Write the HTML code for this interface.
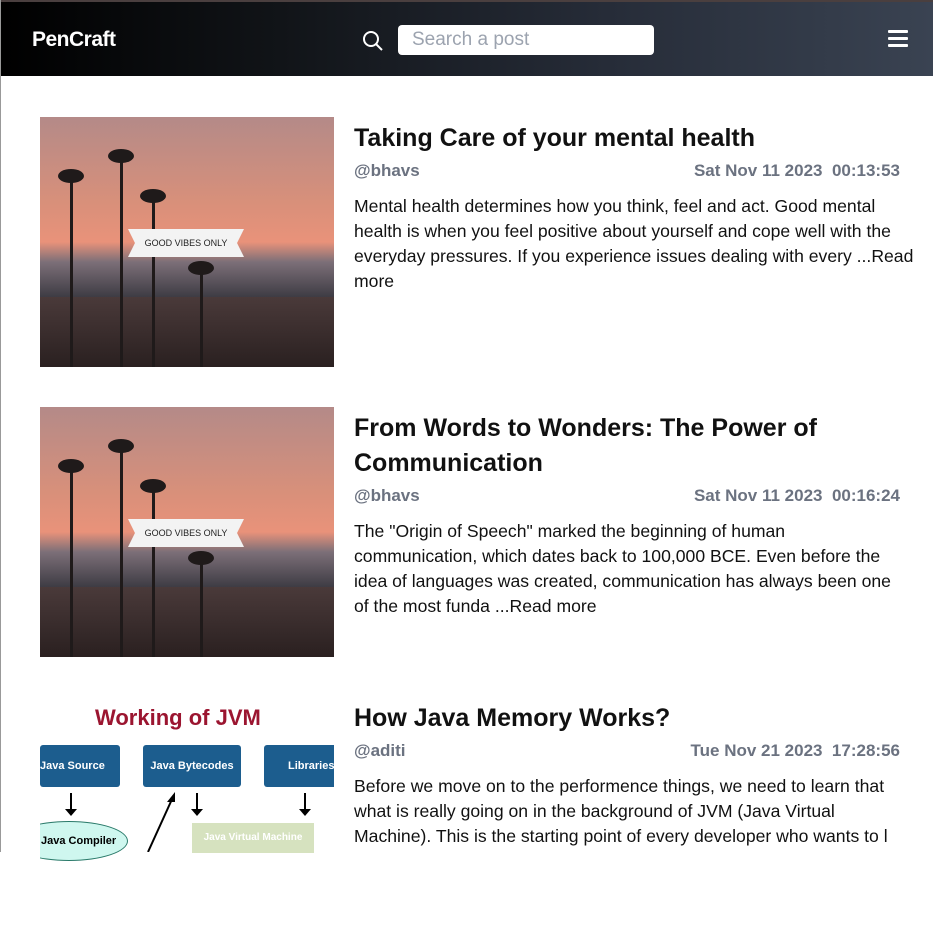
<!DOCTYPE html>
<html><head><meta charset="utf-8"><style>
*{margin:0;padding:0;box-sizing:border-box}
html,body{width:933px;height:852px;overflow:hidden}
body{background:#fff;font-family:"Liberation Sans",sans-serif;border-left:1px solid #999}
.hdr{height:76px;background:linear-gradient(90deg,#000 0%,#111418 30%,#262c38 65%,#3a4352 100%);border-top:2px solid #4a3f3f;position:relative}
.logo{position:absolute;left:31px;top:26px;color:#fff;font-weight:bold;font-size:21px;letter-spacing:-0.5px}
.srch{position:absolute;left:397px;top:23px;width:256px;height:30px;background:#fff;border-radius:4px;color:#9ca3af;font-size:19px;padding:4px 14px}
.ham{position:absolute;left:887px;top:28px;width:20px}
.ham i{display:block;height:3px;background:#fff;margin-bottom:4px;border-radius:1px}
.post{position:absolute;left:40px;width:870px}
.img{position:absolute;left:0;top:0;width:294px;height:250px;background:linear-gradient(180deg,#b48a88 0%,#d9907a 35%,#e9927a 50%,#7c6f78 58%,#3e3c44 72%,#2a2426 100%);overflow:hidden}
.banner{position:absolute;left:88px;top:112px;width:116px;height:28px;background:#f3f3f3;clip-path:polygon(0 0,100% 0,94% 50%,100% 100%,0 100%,6% 50%);font-size:9px;text-align:center;line-height:28px;color:#222}
.palm{position:absolute;background:#1f1a1a;width:3px}
.crown{position:absolute;width:26px;height:14px;background:#1f1a1a;border-radius:50%}
.city{position:absolute;left:0;bottom:0;width:294px;height:70px;background:linear-gradient(180deg,#4a3a3a,#2a2020)}
.t{position:absolute;left:314px;top:4px;font-size:25px;font-weight:bold;color:#111;line-height:35px;width:540px}
.meta{position:absolute;left:314px;width:546px;font-size:17px;font-weight:bold;color:#6b7280;display:flex;justify-content:space-between}
.d{position:absolute;left:314px;width:540px;font-size:17.6px;color:#111;line-height:25px}
</style></head><body>
<div class="hdr">
<div class="logo">PenCraft</div>
<svg style="position:absolute;left:361px;top:28px" width="22" height="22" viewBox="0 0 22 22"><circle cx="9" cy="9" r="7" fill="none" stroke="#fff" stroke-width="2"/><path d="M14 14l6 6" stroke="#fff" stroke-width="2"/></svg>
<div class="srch">Search a post</div>
<div class="ham"><i></i><i></i><i></i></div>
</div>

<div class="post" style="top:117px">
<div class="img"><div class="city"></div><div class="palm" style="left:30px;top:60px;height:190px"></div><div class="crown" style="left:18px;top:52px"></div><div class="palm" style="left:80px;top:40px;height:210px"></div><div class="crown" style="left:68px;top:32px"></div><div class="palm" style="left:112px;top:80px;height:170px"></div><div class="crown" style="left:100px;top:72px"></div><div class="palm" style="left:160px;top:150px;height:100px"></div><div class="crown" style="left:148px;top:144px"></div><div class="banner">GOOD VIBES ONLY</div></div>
<div class="t">Taking Care of your mental health</div>
<div class="meta" style="top:44px"><span>@bhavs</span><span>Sat Nov 11 2023 &nbsp;00:13:53</span></div>
<div class="d" style="top:77px;width:560px">Mental health determines how you think, feel and act. Good mental<br>health is when you feel positive about yourself and cope well with the<br>everyday pressures. If you experience issues dealing with every ...Read<br>more</div>
</div>

<div class="post" style="top:407px">
<div class="img"><div class="city"></div><div class="palm" style="left:30px;top:60px;height:190px"></div><div class="crown" style="left:18px;top:52px"></div><div class="palm" style="left:80px;top:40px;height:210px"></div><div class="crown" style="left:68px;top:32px"></div><div class="palm" style="left:112px;top:80px;height:170px"></div><div class="crown" style="left:100px;top:72px"></div><div class="palm" style="left:160px;top:150px;height:100px"></div><div class="crown" style="left:148px;top:144px"></div><div class="banner">GOOD VIBES ONLY</div></div>
<div class="t">From Words to Wonders: The Power of Communication</div>
<div class="meta" style="top:79px"><span>@bhavs</span><span>Sat Nov 11 2023 &nbsp;00:16:24</span></div>
<div class="d" style="top:112px">The "Origin of Speech" marked the beginning of human<br>communication, which dates back to 100,000 BCE. Even before the idea of languages was created, communication has always been one of the most funda ...Read more</div>
</div>

<div class="post" style="top:697px">
<div class="img" style="background:#fff">
<div style="position:absolute;left:55px;top:8px;font-size:22px;font-weight:bold;color:#9b1530">Working of JVM</div>
<div style="position:absolute;left:0;top:48px;width:80px;height:42px;background:#1c5d8e;border-radius:3px;color:#fff;font-size:11px;font-weight:bold;line-height:42px">Java Source</div>
<div style="position:absolute;left:103px;top:48px;width:98px;height:42px;background:#1c5d8e;border-radius:3px;color:#fff;font-size:11px;font-weight:bold;line-height:42px;text-align:center">Java Bytecodes</div>
<div style="position:absolute;left:224px;top:48px;width:80px;height:42px;background:#1c5d8e;border-radius:3px;color:#fff;font-size:11px;font-weight:bold;line-height:42px;padding-left:24px">Libraries</div>
<div style="position:absolute;left:-30px;top:124px;width:118px;height:40px;background:#cff7ef;border:1px solid #2a7a6a;border-radius:50%;font-size:11px;font-weight:bold;line-height:38px;padding-left:30px">Java Compiler</div>
<div style="position:absolute;left:152px;top:126px;width:122px;height:30px;background:#d6e2bf;color:#fff;font-size:10px;font-weight:bold;line-height:30px;text-align:center">Java Virtual Machine</div>
<svg style="position:absolute;left:0;top:0" width="294" height="155"><path d="M31 96v20M157 96v20M265 96v20" stroke="#000" stroke-width="2"/><path d="M25 112l6 7 6-7zM151 112l6 7 6-7zM259 112l6 7 6-7z" fill="#000"/><path d="M108 155L133 100" stroke="#000" stroke-width="2"/><path d="M135 95l-8 10h8z" fill="#000"/></svg>
</div>
<div class="t">How Java Memory Works?</div>
<div class="meta" style="top:44px"><span>@aditi</span><span>Tue Nov 21 2023 &nbsp;17:28:56</span></div>
<div class="d" style="top:77px">Before we move on to the performence things, we need to learn that what is really going on in the background of JVM (Java Virtual Machine). This is the starting point of every developer who wants to l</div>
</div>
</body></html>
